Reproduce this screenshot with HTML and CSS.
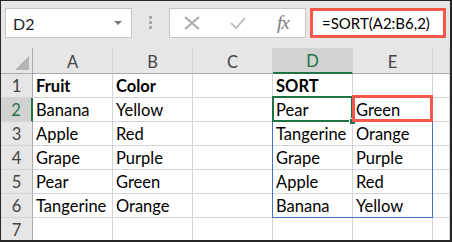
FILE: index.html
```html
<!DOCTYPE html>
<html lang="en">
<head>
    <meta charset="UTF-8">
    <title>SORT function</title>
    <link rel="stylesheet" href="styles.css">
</head>
<body>
    <div class="window">
        <div class="toolbar">
            <div class="namebox">
                <span>D2</span>
                <span class="caret"></span>
            </div>
            <div class="grip"><i></i><i></i><i></i></div>
            <div class="fx-buttons">
                <svg class="btn-x" width="18" height="14" viewBox="0 0 18 14">
                    <path d="M2 1 L16 13 M16 1 L2 13" stroke="#a9a9a9" stroke-width="2" fill="none"/>
                </svg>
                <svg class="btn-check" width="16" height="14" viewBox="0 0 16 14">
                    <path d="M1 7 L6 12 L15 2" stroke="#c2c2c2" stroke-width="2" fill="none"/>
                </svg>
                <span class="fx">fx</span>
            </div>
            <div class="formula">=SORT(A2:B6,2)</div>
        </div>

        <div class="sheet">
            <div class="corner"><span class="tri"></span></div>
            <div class="col-head">A</div>
            <div class="col-head">B</div>
            <div class="col-head">C</div>
            <div class="col-head active">D</div>
            <div class="col-head">E</div>
            <div class="col-head"></div>

            <div class="row-head">1</div>
            <div class="cell bold">Fruit</div>
            <div class="cell bold">Color</div>
            <div class="cell"></div>
            <div class="cell bold">SORT</div>
            <div class="cell"></div>
            <div class="cell"></div>

            <div class="row-head active">2</div>
            <div class="cell">Banana</div>
            <div class="cell">Yellow</div>
            <div class="cell"></div>
            <div class="cell">Pear</div>
            <div class="cell">Green</div>
            <div class="cell"></div>

            <div class="row-head">3</div>
            <div class="cell">Apple</div>
            <div class="cell">Red</div>
            <div class="cell"></div>
            <div class="cell">Tangerine</div>
            <div class="cell">Orange</div>
            <div class="cell"></div>

            <div class="row-head">4</div>
            <div class="cell">Grape</div>
            <div class="cell">Purple</div>
            <div class="cell"></div>
            <div class="cell">Grape</div>
            <div class="cell">Purple</div>
            <div class="cell"></div>

            <div class="row-head">5</div>
            <div class="cell">Pear</div>
            <div class="cell">Green</div>
            <div class="cell"></div>
            <div class="cell">Apple</div>
            <div class="cell">Red</div>
            <div class="cell"></div>

            <div class="row-head">6</div>
            <div class="cell">Tangerine</div>
            <div class="cell">Orange</div>
            <div class="cell"></div>
            <div class="cell">Banana</div>
            <div class="cell">Yellow</div>
            <div class="cell"></div>

            <div class="row-head">7</div>
            <div class="cell"></div>
            <div class="cell"></div>
            <div class="cell"></div>
            <div class="cell"></div>
            <div class="cell"></div>
            <div class="cell"></div>

            <!-- overlays -->
            <div class="spill"></div>
            <div class="selection"><span class="handle"></span></div>
            <div class="callout"></div>
        </div>
    </div>
</body>
</html>
```

FILE: styles.css
```css
:root {
    --toolbar-bg: #e6e6e6;
    --header-bg: #e6e6e6;
    --header-active: #d2d2d2;
    --grid-line: #d4d4d4;
    --header-line: #ababab;
    --excel-green: #217346;
    --spill-blue: #4472c4;
    --callout-red: #f4584a;
}

body {
    margin: 0;
    font-family: Lato, "Liberation Sans", sans-serif;
    color: #000;
}

.window {
    width: 452px;
    height: 242px;
    box-sizing: border-box;
    border: 1px solid #262626;
    border-right-width: 2px;
    border-bottom-width: 2px;
    overflow: hidden;
    background: var(--toolbar-bg);
}

/* formula bar */

.toolbar {
    height: 47px;
    box-sizing: border-box;
    padding: 7px 0 0 4px;
    display: flex;
    align-items: flex-start;
}

.namebox {
    width: 127px;
    height: 30px;
    box-sizing: border-box;
    border: 1px solid #c6c6c6;
    background: white;
    display: flex;
    align-items: center;
    justify-content: space-between;
    padding: 0 9px 0 7px;
    font-size: 16px;
    color: #222;
}

.caret {
    width: 0;
    height: 0;
    border-left: 4px solid transparent;
    border-right: 4px solid transparent;
    border-top: 4px solid #777;
}

.grip {
    width: 3px;
    margin: 8px 17px 0 17px;
    display: flex;
    flex-direction: column;
    gap: 2px;
}

.grip i {
    display: block;
    width: 3px;
    height: 3px;
    background: #a8a8a8;
}

.fx-buttons {
    width: 137px;
    height: 30px;
    box-sizing: border-box;
    border: 1px solid #c6c6c6;
    background: white;
    display: flex;
    align-items: center;
    padding-left: 13px;
}

.btn-check {
    margin-left: 29px;
}

.fx {
    margin-left: 31px;
    font-family: "Liberation Serif", serif;
    font-style: italic;
    font-size: 19px;
    color: #7a7a7a;
    letter-spacing: -1px;
}

.formula {
    width: 136px;
    height: 30px;
    margin-left: 4px;
    box-sizing: border-box;
    border: 3px solid var(--callout-red);
    background: white;
    display: flex;
    align-items: center;
    padding-left: 9px;
    font-size: 15px;
    white-space: nowrap;
}

/* grid */

.sheet {
    position: relative;
    display: grid;
    grid-template-columns: 32px repeat(5, 80px) 1fr;
    grid-template-rows: 26px repeat(7, 24px);
    background: white;
}

.sheet > div {
    box-sizing: border-box;
}

.corner,
.col-head,
.row-head {
    background: var(--header-bg);
    color: #444;
    font-size: 16.5px;
    display: flex;
    align-items: center;
    justify-content: center;
}

.corner {
    position: relative;
    border-right: 1px solid var(--header-line);
    border-bottom: 1px solid var(--header-line);
}

.tri {
    position: absolute;
    right: 3px;
    bottom: 3px;
    width: 0;
    height: 0;
    border-left: 14px solid transparent;
    border-bottom: 14px solid #b4b4b4;
}

.col-head {
    border-right: 1px solid var(--grid-line);
    border-bottom: 1px solid var(--header-line);
    padding-top: 2px;
}

.col-head.active {
    background: var(--header-active);
    color: var(--excel-green);
    border-bottom: 2px solid var(--excel-green);
}

.row-head {
    border-right: 1px solid var(--header-line);
    border-bottom: 1px solid var(--grid-line);
}

.row-head.active {
    background: var(--header-active);
    color: var(--excel-green);
    border-right: 2px solid var(--excel-green);
}

.cell {
    border-right: 1px solid var(--grid-line);
    border-bottom: 1px solid var(--grid-line);
    display: flex;
    align-items: center;
    padding: 1px 0 0 3px;
    font-size: 16.5px;
    white-space: nowrap;
    overflow: hidden;
}

.cell.bold {
    font-weight: bold;
}

.spill {
    position: absolute;
    left: 271px;
    top: 49px;
    width: 161px;
    height: 121px;
    box-sizing: border-box;
    border: 1px solid var(--spill-blue);
}

.selection {
    position: absolute;
    left: 271px;
    top: 48px;
    width: 81px;
    height: 26px;
    box-sizing: border-box;
    border: 2px solid var(--excel-green);
}

.handle {
    position: absolute;
    right: -5px;
    bottom: -5px;
    width: 5px;
    height: 5px;
    background: var(--excel-green);
    border: 1px solid white;
}

.callout {
    position: absolute;
    left: 351px;
    top: 47px;
    width: 81px;
    height: 27px;
    box-sizing: border-box;
    border: 3px solid var(--callout-red);
}
```
